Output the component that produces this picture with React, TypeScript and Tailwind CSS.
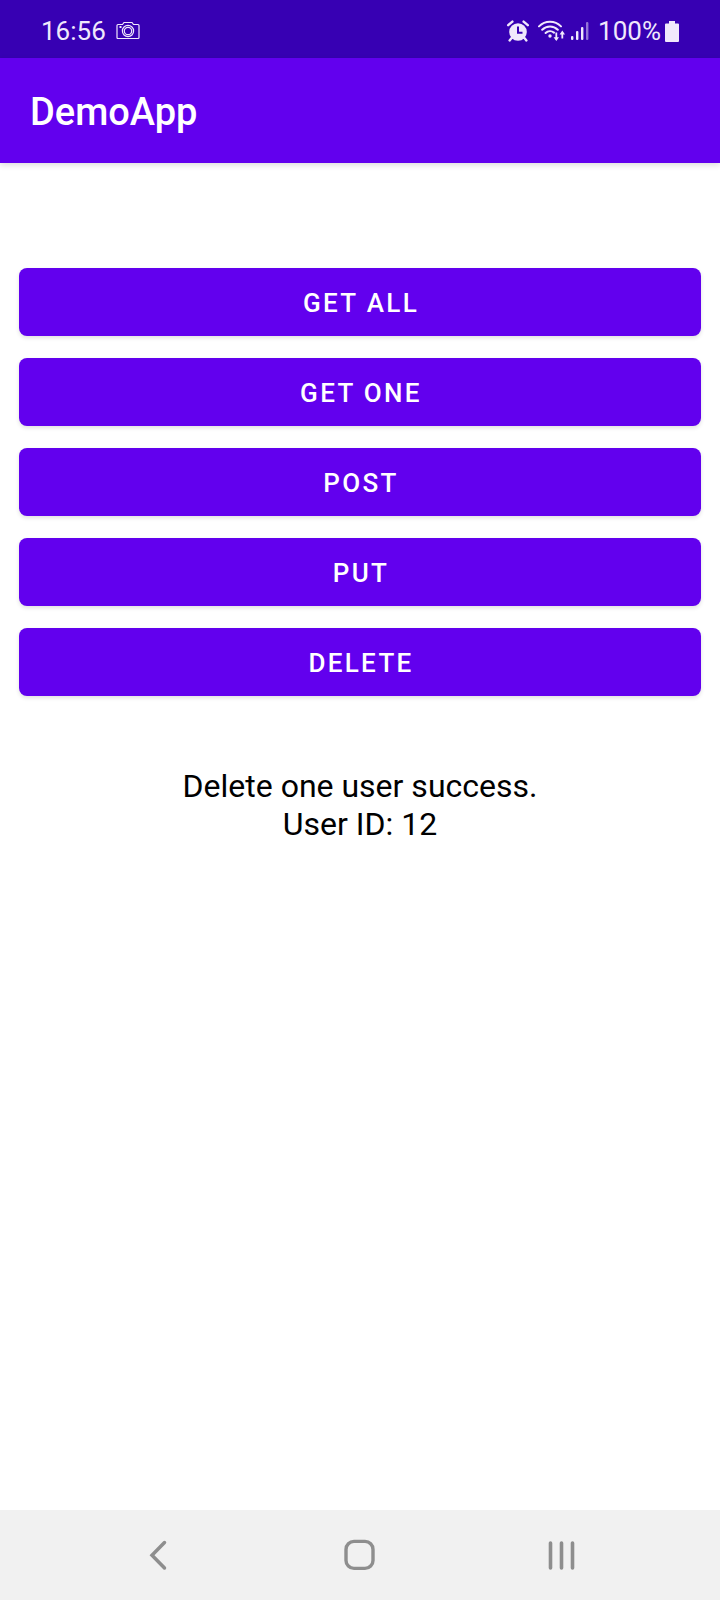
import { useState } from "react";

const actions = [
  { label: "GET ALL", result: ["Get all users success."] },
  { label: "GET ONE", result: ["Get one user success.", "User ID: 12"] },
  { label: "POST", result: ["Create one user success.", "User ID: 12"] },
  { label: "PUT", result: ["Update one user success.", "User ID: 12"] },
  { label: "DELETE", result: ["Delete one user success.", "User ID: 12"] },
];

function CameraIcon() {
  return (
    <svg width="24" height="20" viewBox="0 0 24 20" fill="none" stroke="currentColor" strokeWidth="1.2" aria-hidden="true">
      <path d="M2 3.5h4.5l1.5-2h8l1.5 2H22q1 0 1 1v12q0 1-1 1H2q-1 0-1-1v-12q0-1 1-1z" />
      <circle cx="12" cy="10" r="5.6" />
      <circle cx="12" cy="10" r="3.7" />
      <path d="M3.5 6h2" strokeWidth="2" />
    </svg>
  );
}

function AlarmIcon() {
  return (
    <svg width="24" height="22" viewBox="0 0 24 22" aria-hidden="true">
      <circle cx="12" cy="12" r="8.8" fill="currentColor" />
      <path d="M2.2 5.2l4.2-3.6M21.8 5.2l-4.2-3.6M5.6 18l-2 2.4M18.4 18l2 2.4" stroke="currentColor" strokeWidth="2.4" strokeLinecap="round" />
      <path d="M12 6.5v6.2h4.5" fill="none" stroke="#3700b3" strokeWidth="2" />
    </svg>
  );
}

function WifiIcon() {
  return (
    <svg width="28" height="22" viewBox="0 0 28 22" fill="none" stroke="currentColor" aria-hidden="true">
      <path d="M1 6.4a15.6 15.6 0 0 1 22 0M4.2 9.8a11 11 0 0 1 15.6 0M7.6 13a6.4 6.4 0 0 1 8.4-.4" strokeWidth="2" strokeLinecap="round" />
      <circle cx="12" cy="16" r="1.7" fill="currentColor" stroke="none" />
      <path d="M18.3 12.5v7M24.3 18.5v-6" strokeWidth="1.8" />
      <path d="M15.6 17.2h5.4l-2.7 3.8zM21.6 14.4h5.4l-2.7-3.8z" fill="currentColor" stroke="none" />
    </svg>
  );
}

function SignalIcon() {
  return (
    <svg width="20" height="20" viewBox="0 0 20 20" fill="currentColor" aria-hidden="true">
      <rect x="1" y="15" width="2.4" height="4" rx="1" />
      <rect x="6" y="10" width="2.4" height="9" rx="1" />
      <rect x="11" y="6" width="2.4" height="13" rx="1" />
      <rect x="16" y="1" width="2.4" height="18" rx="1" opacity="0.5" />
    </svg>
  );
}

function BatteryIcon() {
  return (
    <svg width="14" height="21" viewBox="0 0 14 21" fill="currentColor" aria-hidden="true">
      <path d="M4 0h6v2.5h3q1 0 1 1V20q0 1-1 1H1q-1 0-1-1V3.5q0-1 1-1h3z" />
    </svg>
  );
}

function StatusBar() {
  return (
    <div className="flex items-center justify-between bg-[#3700b3] px-[41px] pt-[14px] pb-[10px] text-[26px] leading-[34px] text-[#f0e8fc]">
      <div className="flex items-center gap-2.5">
        <span>16:56</span>
        <CameraIcon />
      </div>
      <div className="flex items-center">
        <div className="flex items-center gap-2">
          <AlarmIcon />
          <WifiIcon />
        </div>
        <div className="ml-1 flex items-center gap-2">
          <SignalIcon />
          <div className="flex items-center gap-1">
            <span>100%</span>
            <BatteryIcon />
          </div>
        </div>
      </div>
    </div>
  );
}

function NavigationBar() {
  const key = "flex h-[90px] w-[28%] items-center justify-center";
  return (
    <nav className="flex justify-center bg-[#f1f1f1] text-[#8e8e8e]">
      <button type="button" aria-label="Back" className={key}>
        <svg width="20" height="32" viewBox="0 0 20 32" fill="none" stroke="currentColor" strokeWidth="3.5" strokeLinecap="round" aria-hidden="true">
          <path d="M16.5 3.5L4 16.2L16.5 29" />
        </svg>
      </button>
      <button type="button" aria-label="Home" className={key}>
        <svg width="32" height="32" viewBox="0 0 32 32" fill="none" stroke="currentColor" strokeWidth="3.4" aria-hidden="true">
          <rect x="2" y="2.4" width="27" height="27" rx="8" />
        </svg>
      </button>
      <button type="button" aria-label="Recent apps" className={key}>
        <svg width="28" height="30" viewBox="0 0 28 30" fill="none" stroke="currentColor" strokeWidth="3.6" strokeLinecap="round" aria-hidden="true">
          <path d="M2.5 3v25M13.5 3v25M24.5 3v25" />
        </svg>
      </button>
    </nav>
  );
}

export default function App() {
  const [result, setResult] = useState(actions[4].result);

  return (
    <div className="flex min-h-screen flex-col bg-white font-['Roboto',sans-serif]">
      <StatusBar />
      <header className="bg-[#6200ee] px-[30px] pt-[34px] pb-[30px] shadow-[0_2px_6px_rgba(0,0,0,0.14)]">
        <h1 className="text-[38px] leading-[41px] font-medium text-white">DemoApp</h1>
      </header>
      <main className="flex grow flex-col px-[19px] pt-[105px]">
        <div className="flex flex-col gap-[22px]">
          {actions.map((action) => (
            <button
              key={action.label}
              type="button"
              onClick={() => setResult(action.result)}
              className="h-[68px] rounded-lg bg-[#6200ee] pt-0.5 pl-0.5 text-[26px] font-medium tracking-[0.09em] text-white shadow-[0_2px_4px_rgba(0,0,0,0.12)]"
            >
              {action.label}
            </button>
          ))}
        </div>
        <div role="status" className="mt-[71px] text-center text-[32px] leading-[38px] text-black">
          {result.map((line) => (
            <p key={line}>{line}</p>
          ))}
        </div>
      </main>
      <NavigationBar />
    </div>
  );
}
